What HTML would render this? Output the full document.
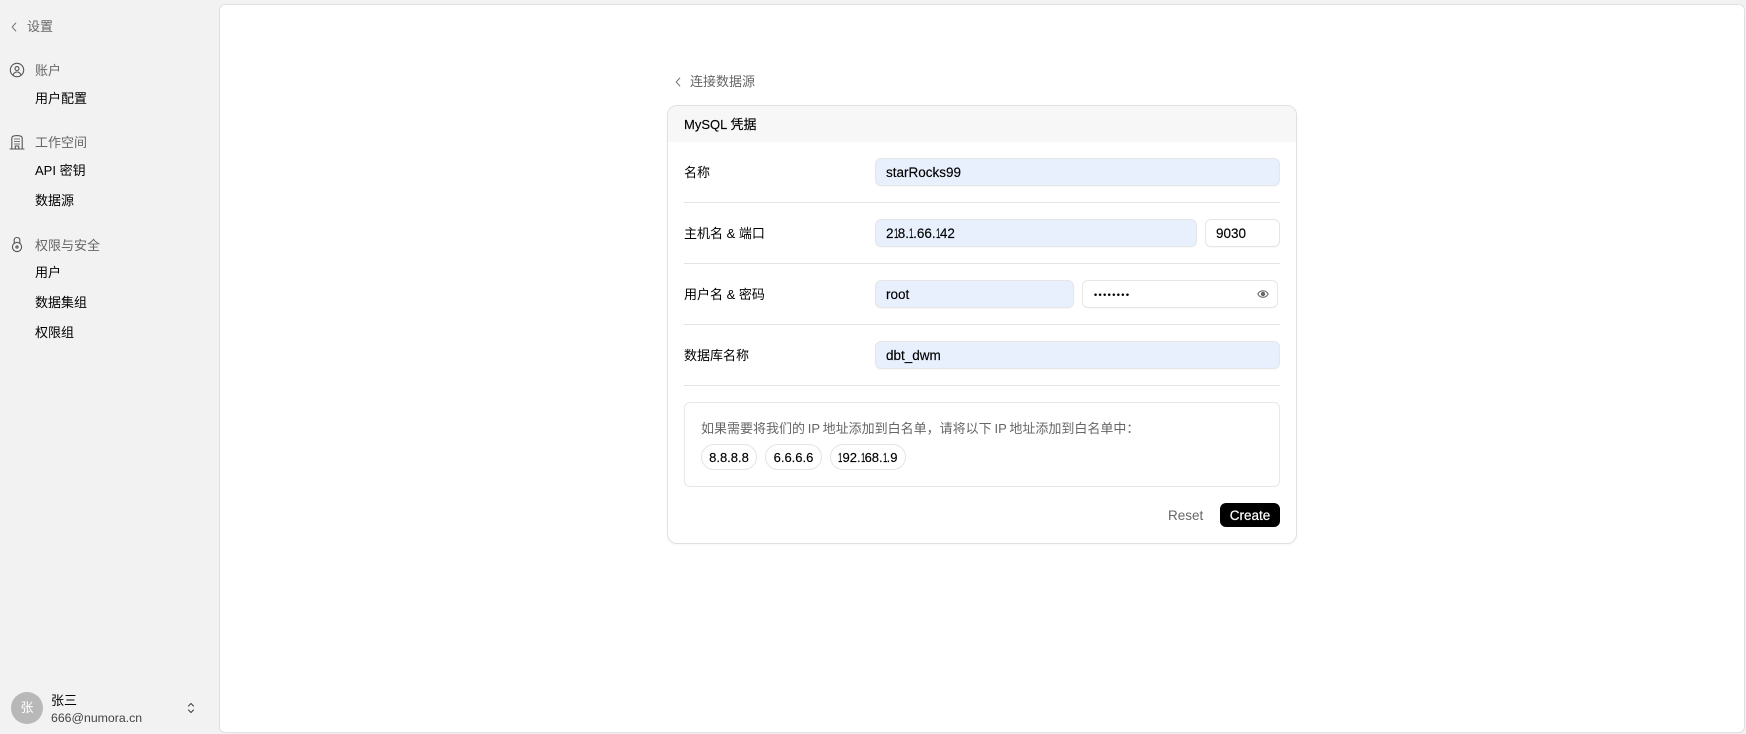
<!DOCTYPE html>
<html lang="zh"><head><meta charset="utf-8"><title>连接数据源</title>
<style>
*{box-sizing:border-box}
html,body{margin:0;padding:0;width:1746px;height:734px;overflow:hidden;background:#f2f2f2;font-family:"Liberation Sans","Noto Sans CJK SC",sans-serif;font-size:13px;color:#000}
.t{position:absolute;white-space:nowrap;line-height:18px;height:18px}
.g{color:#666}
.main{position:absolute;left:219px;top:4px;width:1526px;height:729px;background:#fff;border:1px solid #e0e0e0;border-radius:6px}
.card{position:absolute;left:667px;top:105px;width:630px;height:439px;background:#fff;border:1px solid #e0e0e0;border-radius:10px;box-shadow:0 1px 2px rgba(0,0,0,.04);overflow:hidden}
.hd{position:absolute;left:0;top:0;right:0;height:36px;background:#f7f7f7}
.in{position:absolute;height:28px;border:1px solid #e6e6e6;border-radius:6px;background:#e8f0fe;line-height:27px;padding-left:10px;font-size:13.5px;box-shadow:0 1px 1px rgba(0,0,0,.03);-webkit-text-stroke:.15px #000}
.w{background:#fff}
.n{display:inline-block;width:.31em;transform:scaleX(.6);transform-origin:0 50%}
.hr{position:absolute;left:684px;width:596px;height:1px;background:#e4e4e4}
.box{position:absolute;left:684px;top:402px;width:596px;height:85px;border:1px solid #e8e8e8;border-radius:6px}
.pill{position:absolute;top:444px;height:26px;border:1px solid #e4e4e4;border-radius:13px;background:#fff;line-height:26px;text-align:center;font-size:13px;-webkit-text-stroke:.15px #000}
.btn{position:absolute;left:1220px;top:503px;width:60px;height:24px;background:#000;color:#fff;border-radius:6px;text-align:center;line-height:25px;font-size:13.5px;-webkit-text-stroke:.2px #fff}
.av{position:absolute;left:11px;top:692px;width:32px;height:32px;border-radius:50%;background:#b8b8b8;color:#fff;text-align:center;line-height:32px;font-size:13px}
svg{position:absolute;fill:none;stroke-linecap:round;stroke-linejoin:round}
</style></head><body>

<svg style="left:8px;top:21px" width="12" height="12" viewBox="0 0 12 12" stroke="#777" stroke-width="1"><path d="M7.800 2 L4.200 6 L7.800 10"/></svg>
<div class="t g" style="left:27px;top:18px">设置</div>

<svg style="left:9px;top:62px" width="16" height="16" viewBox="0 0 16 16" stroke="#555" stroke-width="1.1"><circle cx="8" cy="8" r="6.700"/><circle cx="8" cy="6.600" r="2"/><path d="M4.300 12.600c.7-1.800 2-2.600 3.700-2.600s3 .8 3.700 2.600"/></svg>
<div class="t g" style="left:35px;top:62px">账户</div>
<div class="t" style="left:35px;top:90px">用户配置</div>

<svg style="left:9px;top:134px" width="16" height="16" viewBox="0 0 16 16" stroke="#555" stroke-width="1.1"><path d="M1 15H15"/><path d="M2.800 15V4.200C2.800 2.800 4.500 1.600 8 1.600s5.200 1.200 5.200 2.600V15"/><path d="M6.300 15v-3h3.400v3"/><path d="M5.600 5h.8M7.600 5h.8M9.600 5h.8M5.600 7.500h.8M7.600 7.500h.8M9.600 7.500h.8M5.600 10h.8M7.600 10h.8M9.600 10h.8" stroke-width="1"/></svg>
<div class="t g" style="left:35px;top:134px">工作空间</div>
<div class="t" style="left:35px;top:162px">API 密钥</div>
<div class="t" style="left:35px;top:192px">数据源</div>

<svg style="left:9px;top:236px" width="16" height="17" viewBox="0 0 16 17" stroke="#555" stroke-width="1.1"><circle cx="8" cy="11" r="4.600"/><path d="M5.200 7.300V4.200C5.200 2.500 6.300 1.500 8 1.500s2.800 1 2.800 2.700v3.100"/><circle cx="8" cy="11" r="1.100"/></svg>
<div class="t g" style="left:35px;top:237px">权限与安全</div>
<div class="t" style="left:35px;top:264px">用户</div>
<div class="t" style="left:35px;top:294px">数据集组</div>
<div class="t" style="left:35px;top:324px">权限组</div>

<div class="av">张</div>
<div class="t" style="left:51px;top:692px">张三</div>
<div class="t" style="left:51px;top:709px;color:#444;font-size:12.300px">666@numora.cn</div>
<svg style="left:185px;top:700px" width="12" height="16" viewBox="0 0 12 16" stroke="#444" stroke-width="1.100"><path d="M3.500 6 6 3.500 8.500 6M3.500 10 6 12.500 8.500 10"/></svg>

<div class="main"></div>

<svg style="left:672px;top:76px" width="12" height="12" viewBox="0 0 12 12" stroke="#777" stroke-width="1"><path d="M7.800 2 L4.200 6 L7.800 10"/></svg>
<div class="t g" style="left:690px;top:73px">连接数据源</div>

<div class="card"><div class="hd"></div></div>
<div class="t" style="left:684px;top:116px;-webkit-text-stroke:.15px #000">MySQL 凭据</div>

<div class="t" style="left:684px;top:164px">名称</div>
<div class="in" style="left:875px;top:158px;width:405px">starRocks99</div>
<div class="hr" style="top:202px"></div>

<div class="t" style="left:684px;top:225px">主机名 &amp; 端口</div>
<div class="in" style="left:875px;top:219px;width:322px">2<span class="n">1</span>8.<span class="n">1</span>.66.<span class="n">1</span>42</div>
<div class="in w" style="left:1205px;top:219px;width:75px">9030</div>
<div class="hr" style="top:263px"></div>

<div class="t" style="left:684px;top:286px">用户名 &amp; 密码</div>
<div class="in" style="left:875px;top:280px;width:199px">root</div>
<div class="in w" style="left:1082px;top:280px;width:196px;font-size:9px;letter-spacing:1.400px;padding-top:1px;padding-left:11px">••••••••</div>
<svg style="left:1257px;top:288px" width="12" height="12" viewBox="0 0 12 12" stroke="#666" stroke-width="1"><path d="M.8 6C2 3.800 3.800 2.700 6 2.700S10 3.800 11.200 6C10 8.200 8.200 9.300 6 9.300S2 8.200 .8 6Z"/><circle cx="6" cy="6" r="1.700" fill="#666"/></svg>
<div class="hr" style="top:324px"></div>

<div class="t" style="left:684px;top:347px">数据库名称</div>
<div class="in" style="left:875px;top:341px;width:405px">dbt_dwm</div>
<div class="hr" style="top:385px"></div>

<div class="box"></div>
<div class="t g" style="left:701px;top:420px;word-spacing:-.8px">如果需要将我们的 IP 地址添加到白名单，请将以下 IP 地址添加到白名单中：</div>
<div class="pill" style="left:701px;width:56px">8.8.8.8</div>
<div class="pill" style="left:765px;width:57px">6.6.6.6</div>
<div class="pill" style="left:830px;width:76px"><span class="n">1</span>92.<span class="n">1</span>68.<span class="n">1</span>.9</div>

<div class="t g" style="left:1168px;top:507px;font-size:13.500px">Reset</div>
<div class="btn">Create</div>
</body></html>
